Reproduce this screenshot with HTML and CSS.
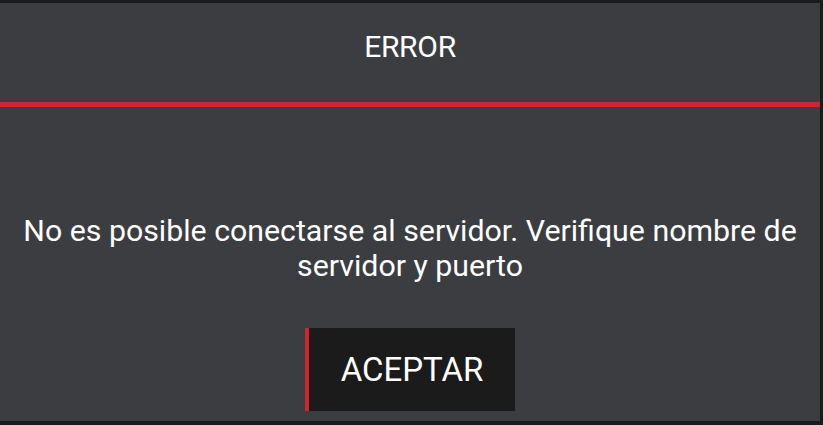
FILE: index.html
```html
<!DOCTYPE html>
<html lang="es">
<head>
    <meta charset="UTF-8">
    <meta name="viewport" content="width=device-width, initial-scale=1.0">
    <title>Error</title>
    <link rel="stylesheet" href="styles.css">
</head>
<body>
    <!-- Dialog -->
    <div class="dialog">
        <div class="dialog-title">ERROR</div>
        <div class="dialog-divider"></div>

        <div class="dialog-body">
            <p class="message">No es posible conectarse al servidor. Verifique nombre de servidor y puerto</p>
        </div>

        <div class="dialog-actions">
            <button class="accept-btn">ACEPTAR</button>
        </div>
    </div>
</body>
</html>
```

FILE: styles.css
```css
/* Basic Reset */
* {
    margin: 0;
    padding: 0;
    box-sizing: border-box;
}

html, body {
    width: 823px;
    height: 425px;
    overflow: hidden;
}

body {
    font-family: Roboto, "Noto Sans", Arial, sans-serif;
    background-color: #1a1b1d; /* Frame edge */
    color: #fff;
    padding: 3px 3px 4px 0;
}

/* Dialog */
.dialog {
    height: 100%;
    background-color: #3c3d41; /* Dark gray */
    display: flex;
    flex-direction: column;
}

.dialog-title {
    height: 99px;
    display: flex;
    align-items: center;
    justify-content: center;
    padding-bottom: 12px;
    font-size: 30px;
    letter-spacing: -0.3px;
}

.dialog-divider {
    height: 5px;
    background-color: #d3252b; /* Red */
}

.dialog-body {
    height: 221px;
    padding: 106px 16px 0;
}

.message {
    text-align: center;
    font-size: 30.3px;
    line-height: 35px;
}

.dialog-actions {
    display: flex;
    justify-content: center;
}

.accept-btn {
    width: 210px;
    height: 83px;
    background-color: #1b1b1b;
    border: none;
    border-left: 4px solid #d3252b;
    color: #fff;
    font-family: inherit;
    font-size: 33px;
    cursor: pointer;
}
```
